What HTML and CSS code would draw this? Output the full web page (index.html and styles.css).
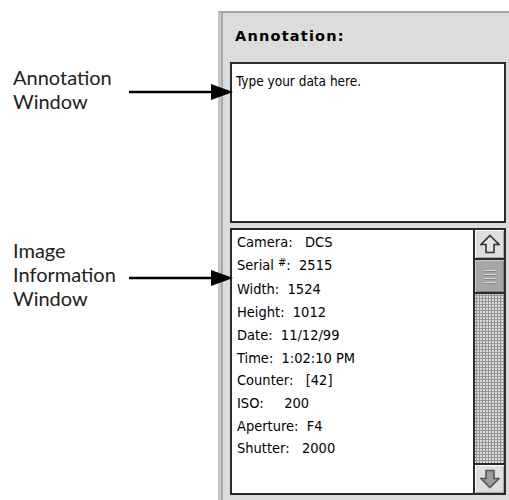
FILE: index.html
```html
<!DOCTYPE html>
<html>
<head>
<meta charset="utf-8">
<link rel="stylesheet" href="styles.css">
</head>
<body>
<div class="page">
  <div class="callouts">
    <div class="callout callout-annot">
      <div class="callout-text">Annotation<br>Window</div>
      <svg class="arrow" viewBox="0 0 104 18" width="104" height="18"><line x1="0" y1="9" x2="84" y2="9" stroke="#000" stroke-width="2.5"/><polygon points="82,1 104,9 82,17" fill="#000"/></svg>
    </div>
    <div class="callout callout-info">
      <div class="callout-text">Image<br>Information<br>Window</div>
      <svg class="arrow" viewBox="0 0 104 18" width="104" height="18"><line x1="0" y1="9" x2="84" y2="9" stroke="#000" stroke-width="2.5"/><polygon points="82,1 104,9 82,17" fill="#000"/></svg>
    </div>
  </div>
  <div class="panel">
    <div class="panel-title">Annotation:</div>
    <div class="annot-box">Type your data here.</div>
    <div class="info-box">
      <div class="info-list">
        <div class="row">Camera:   DCS</div>
        <div class="row">Serial <span class="hash">#</span>:  2515</div>
        <div class="row">Width:  1524</div>
        <div class="row">Height:  1012</div>
        <div class="row">Date:  11/12/99</div>
        <div class="row">Time:  1:02:10 PM</div>
        <div class="row">Counter:   [42]</div>
        <div class="row">ISO:     200</div>
        <div class="row">Aperture:  F4</div>
        <div class="row">Shutter:   2000</div>
      </div>
      <div class="scrollbar">
        <div class="sb-btn sb-up">
          <svg viewBox="0 0 20 20" width="20" height="20"><polygon points="10,1.5 19,10.5 14,10.5 14,18.5 6,18.5 6,10.5 1,10.5" fill="#e4e4e4" stroke="#333" stroke-width="1.6" stroke-linejoin="miter"/></svg>
        </div>
        <div class="sb-thumb">
          <span></span><span></span><span></span><span></span>
        </div>
        <div class="sb-track"></div>
        <div class="sb-btn sb-down">
          <svg viewBox="0 0 20 20" width="20" height="20"><polygon points="10,18.5 19,9.5 14,9.5 14,1.5 6,1.5 6,9.5 1,9.5" fill="#9a9a9a" stroke="#555" stroke-width="1.6" stroke-linejoin="miter"/></svg>
        </div>
      </div>
    </div>
  </div>
</div>
</body>
</html>
```

FILE: styles.css
```css
html, body {
  margin: 0;
  padding: 0;
  background: #fff;
  overflow: hidden;
}

.page {
  display: flex;
  width: 509px;
  height: 500px;
}

.callouts {
  position: relative;
  z-index: 2;
  width: 233px;
  margin-right: -15px;
  display: flex;
  flex-direction: column;
  padding-top: 65px;
  gap: 125px;
}

.callout {
  display: flex;
  align-items: center;
}

.callout-text {
  width: 116px;
  padding-left: 13px;
  font-family: Lato, "Open Sans", sans-serif;
  font-size: 20px;
  line-height: 24px;
  color: #222;
}

.callout-annot .arrow {
  margin-top: 6px;
}

.callout-info .arrow {
  margin-top: 8px;
}

.arrow {
  flex: none;
  display: block;
}

.panel {
  flex: 1;
  margin-top: 11px;
  background: #dcdcdc;
  border-top: 2px solid #a4a4a4;
  border-left: 3px solid #c6c6c6;
  box-shadow: inset 2px 0 0 #a8a8a8;
  padding: 0 3px 0 9px;
  display: flex;
  flex-direction: column;
}

.panel-title {
  padding: 14px 0 0 5px;
  height: 35px;
  font-family: "DejaVu Sans", sans-serif;
  font-weight: bold;
  font-size: 14.5px;
  letter-spacing: 1.2px;
  line-height: 18px;
  color: #000;
}

.annot-box {
  box-sizing: border-box;
  height: 161px;
  background: #fff;
  border: 2px solid #2a2a2a;
  padding: 6px 4px 0;
  font-family: "DejaVu Sans Condensed", "DejaVu Sans", sans-serif;
  font-size: 13.5px;
  line-height: 22px;
  color: #000;
}

.info-box {
  box-sizing: border-box;
  margin-top: 5px;
  height: 267px;
  background: #fff;
  border: 2px solid #2a2a2a;
  display: flex;
}

.info-list {
  flex: 1;
  padding: 1px 0 0 5px;
  font-family: "DejaVu Sans Condensed", "DejaVu Sans", sans-serif;
  font-size: 14.5px;
  line-height: 22.7px;
  color: #000;
}

.row {
  white-space: pre;
}

.hash {
  font-size: 11px;
  position: relative;
  top: -4px;
}

.scrollbar {
  width: 29px;
  border-left: 2px solid #2a2a2a;
  display: flex;
  flex-direction: column;
}

.sb-btn {
  height: 28px;
  background: #dedede;
  display: flex;
  align-items: center;
  justify-content: center;
  box-shadow: inset 1px 1px 0 #fff, inset -1px -1px 0 #aaa;
}

.sb-btn svg {
  display: block;
}

.sb-up {
  border-bottom: 2px solid #2a2a2a;
}

.sb-down {
  border-top: 2px solid #2a2a2a;
}

.sb-thumb {
  height: 32px;
  background: #a6a6a6;
  border-bottom: 2px solid #2a2a2a;
  box-shadow: inset 1px 1px 0 #c8c8c8, inset -1px -1px 0 #808080;
  display: flex;
  flex-direction: column;
  align-items: center;
  justify-content: center;
  gap: 3px;
}

.sb-thumb span {
  display: block;
  width: 12px;
  height: 1px;
  background: #d6d6d6;
  box-shadow: 0 1px 0 #888;
}

.sb-track {
  flex: 1;
  background-color: #dadada;
  background-image: radial-gradient(circle, #949494 1px, transparent 1.1px);
  background-size: 3px 3px;
}
```
